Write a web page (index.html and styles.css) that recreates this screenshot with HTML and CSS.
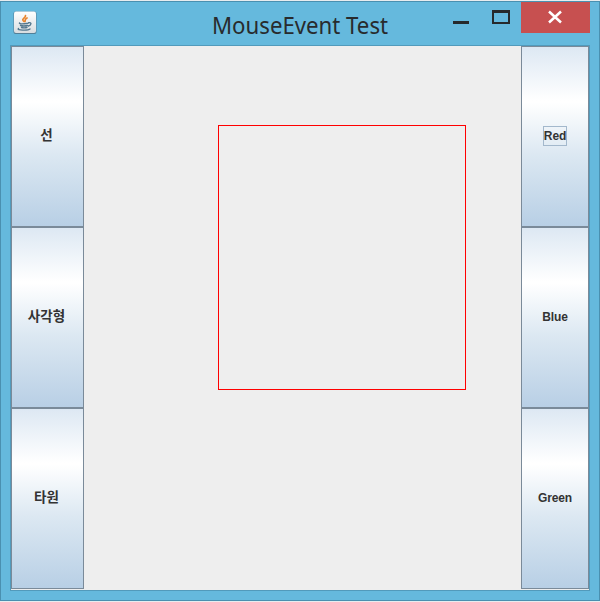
FILE: index.html
```html
<!DOCTYPE html>
<html lang="ko">
<head>
<meta charset="utf-8">
<title>MouseEvent Test</title>
<link rel="stylesheet" href="styles.css">
</head>
<body>
<div class="window">
  <header class="titlebar">
    <svg class="app-icon" width="24" height="24" viewBox="0 0 24 24">
      <defs><linearGradient id="tile" x1="0" y1="0" x2="0" y2="1"><stop offset="0" stop-color="#fff"/><stop offset="1" stop-color="#d9dde0"/></linearGradient></defs>
      <rect x=".5" y=".5" width="23" height="22.5" rx="2" fill="#527f98"/>
      <rect x="1" y=".5" width="22" height="21.5" rx="2" fill="url(#tile)"/>
      <g fill="none" stroke-linecap="round">
        <path d="M12.500 4.500C13 7 8.500 7.500 10 9.500L11 10.500M14 7C11.500 8 12.500 9 12 10.500" stroke="#e8842c" stroke-width="1.700"/>
        <path d="M6.500 12C6 13.200 10 13 15 12.300M7.500 14.500Q11 15.500 14.500 14.500M8.500 16.500Q11 17.300 14 16.500M15.500 11.800C19 11 18.500 14 15.500 15M5.500 17.500C3 19.300 15 19.800 17 18" stroke="#54788f" stroke-width="1.400"/>
      </g>
    </svg>
    <h1 class="title">MouseEvent Test</h1>
    <div class="controls">
      <svg width="69" height="32" viewBox="0 0 69 32"><path d="M1 19h16v3H1z" fill="#262a2c"/><path fill-rule="evenodd" d="M40 8h18v14H40zM42 11v9h14v-9z" fill="#262a2c"/></svg>
      <svg class="close" width="69" height="31" viewBox="0 0 69 31"><path d="M28 9.500l12 11M40 9.500l-12 11" stroke="#fff" stroke-width="2.500"/></svg>
    </div>
  </header>
  <main class="content">
    <div class="column shapes">
      <button>선</button>
      <button>사각형</button>
      <button>타원</button>
    </div>
    <div class="canvas"><div class="drawn-rect"></div></div>
    <div class="column colors">
      <button><span class="focused">Red</span></button>
      <button>Blue</button>
      <button>Green</button>
    </div>
  </main>
</div>
</body>
</html>
```
FILE: styles.css
```css
* { box-sizing: border-box; }
body { margin: 0; padding: 1px 0; background: #e8ecef; }
.window {
  height: 600px;
  border: 1px solid #4a90b0;
  background: #65b9dd;
  padding: 0 9px 9px;
  display: flex;
  flex-direction: column;
}
.titlebar {
  height: 43px;
  flex: none;
  display: grid;
  grid-template-columns: 139px 1fr 139px;
  align-items: start;
}
.app-icon { margin: 9px 0 0 3px; }
.title {
  margin: 7px 0 0;
  text-align: center;
  font: 400 23.500px/32px "Noto Sans", sans-serif;
  white-space: nowrap;
  color: #282b2d;
  transform: scaleX(.945);
}
.controls { display: flex; align-items: flex-start; justify-content: flex-end; }
.close { background: #c75050; }
.content {
  flex: 1;
  display: flex;
  border: 1px solid #529abb;
  background: #eee;
}
.column { display: flex; flex-direction: column; height: 543px; }
.shapes { width: 73px; }
.colors { width: 68px; }
.column button {
  flex: 1;
  margin: 0;
  padding: 0 0 2px;
  border: 1px solid #7a8a99;
  border-radius: 0;
  background: linear-gradient(#dde8f3 0%, #fff 30%, #fff 31%, #dce8f2 60%, #b8cfe5 100%);
  color: #333;
  font: bold 12px/16px "Liberation Sans", "Noto Sans CJK KR", sans-serif;
}
.shapes button { font-size: 13.500px; padding-right: 2px; }
.colors button { letter-spacing: -.1px; }
.focused { display: inline-block; border: 1px solid #a3b8cc; line-height: 18px; }
.canvas { flex: 1; padding: 79px 0 0 134px; }
.drawn-rect { width: 248px; height: 265px; border: 1px solid #f00; }
```
